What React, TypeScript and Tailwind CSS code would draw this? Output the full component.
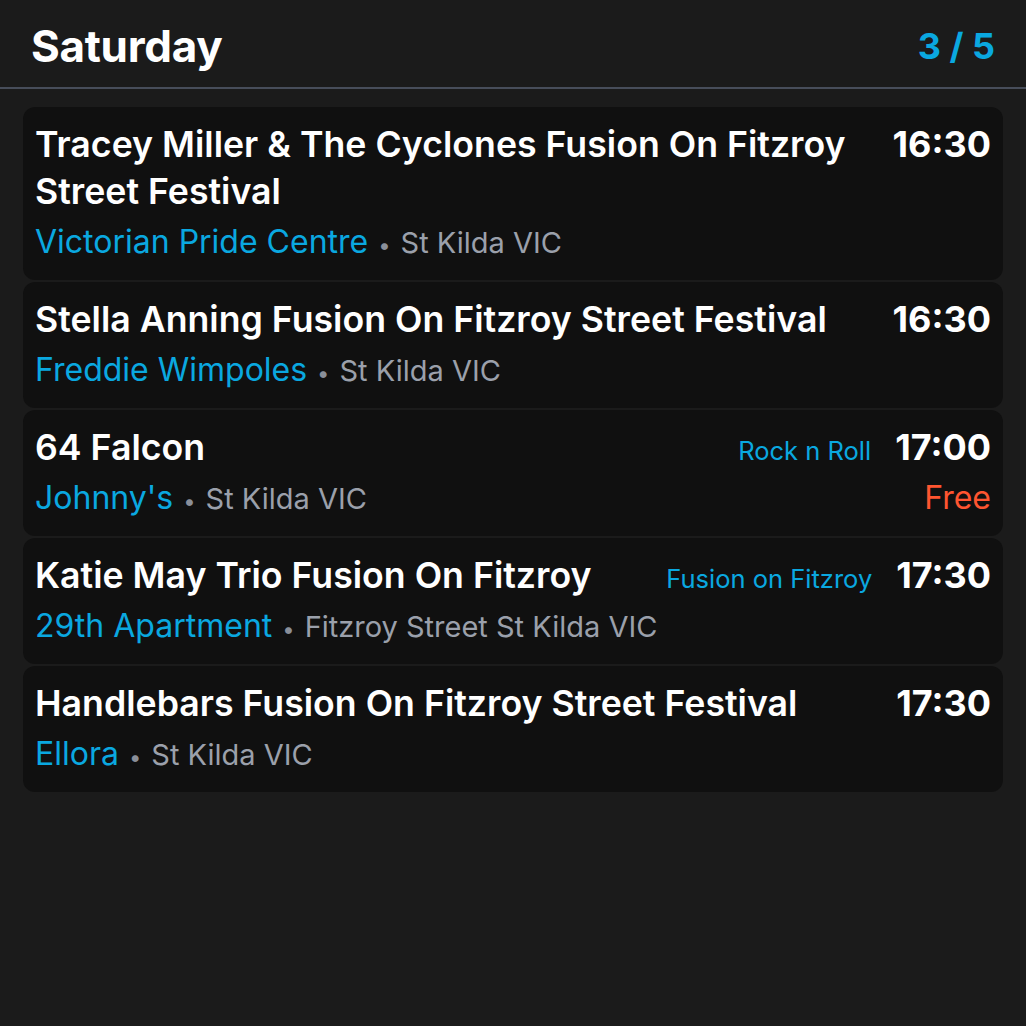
import React from "react";

type Ev = {
  title: string;
  venue: string;
  loc: string;
  time: string;
  genre?: string;
  free?: boolean;
};

const events: Ev[] = [
  {
    title: "Tracey Miller & The Cyclones Fusion On Fitzroy Street Festival",
    venue: "Victorian Pride Centre",
    loc: "St Kilda VIC",
    time: "16:30",
  },
  {
    title: "Stella Anning Fusion On Fitzroy Street Festival",
    venue: "Freddie Wimpoles",
    loc: "St Kilda VIC",
    time: "16:30",
  },
  {
    title: "64 Falcon",
    venue: "Johnny's",
    loc: "St Kilda VIC",
    time: "17:00",
    genre: "Rock n Roll",
    free: true,
  },
  {
    title: "Katie May Trio Fusion On Fitzroy",
    venue: "29th Apartment",
    loc: "Fitzroy Street St Kilda VIC",
    time: "17:30",
    genre: "Fusion on Fitzroy",
  },
  {
    title: "Handlebars Fusion On Fitzroy Street Festival",
    venue: "Ellora",
    loc: "St Kilda VIC",
    time: "17:30",
  },
];

export default function App() {
  return (
    <div
      className="w-[1026px] h-[1026px] bg-[#1b1b1b] text-white overflow-hidden"
      style={{ fontFamily: "Inter, 'Noto Sans', sans-serif" }}
    >
      <div className="flex items-center justify-between px-[31px] pt-[5px] h-[89px] border-b-2 border-[#474d5a]">
        <div className="text-[44px] leading-none font-bold tracking-[-0.3px]">Saturday</div>
        <div className="text-[36px] leading-none font-bold text-[#0aa8e0]">3 / 5</div>
      </div>
      <div className="flex flex-col gap-[2px] px-[23px] pt-[18px]">
        {events.map((e, i) => (
          <div key={i} className="bg-[#101010] rounded-[12px] px-[12px] pt-[14px] pb-[16px] flex flex-col gap-[5px]">
            <div className="flex gap-6">
              <div className="flex-1 min-w-0 text-[35.7px] font-semibold leading-[47px]">{e.title}</div>
              <div className="flex items-baseline gap-6 shrink-0 h-[47px]">
                {e.genre && <span className="text-[25.5px] leading-none text-[#0aa8e0]">{e.genre}</span>}
                <span className="text-[36px] leading-[47px] font-bold">{e.time}</span>
              </div>
            </div>
            <div className="flex items-baseline justify-between h-[44px]">
              <div className="flex items-baseline whitespace-nowrap">
                <span className="text-[32px] leading-[44px] text-[#0aa8e0]">{e.venue}</span>
                <span className="text-[22px] leading-none text-[#8a8f99] mx-[10px]">•</span>
                <span className="text-[29px] leading-none text-[#9ba0ab]">{e.loc}</span>
              </div>
              {e.free && <div className="text-[32px] leading-[44px] text-[#ff5530]">Free</div>}
            </div>
          </div>
        ))}
      </div>
    </div>
  );
}
